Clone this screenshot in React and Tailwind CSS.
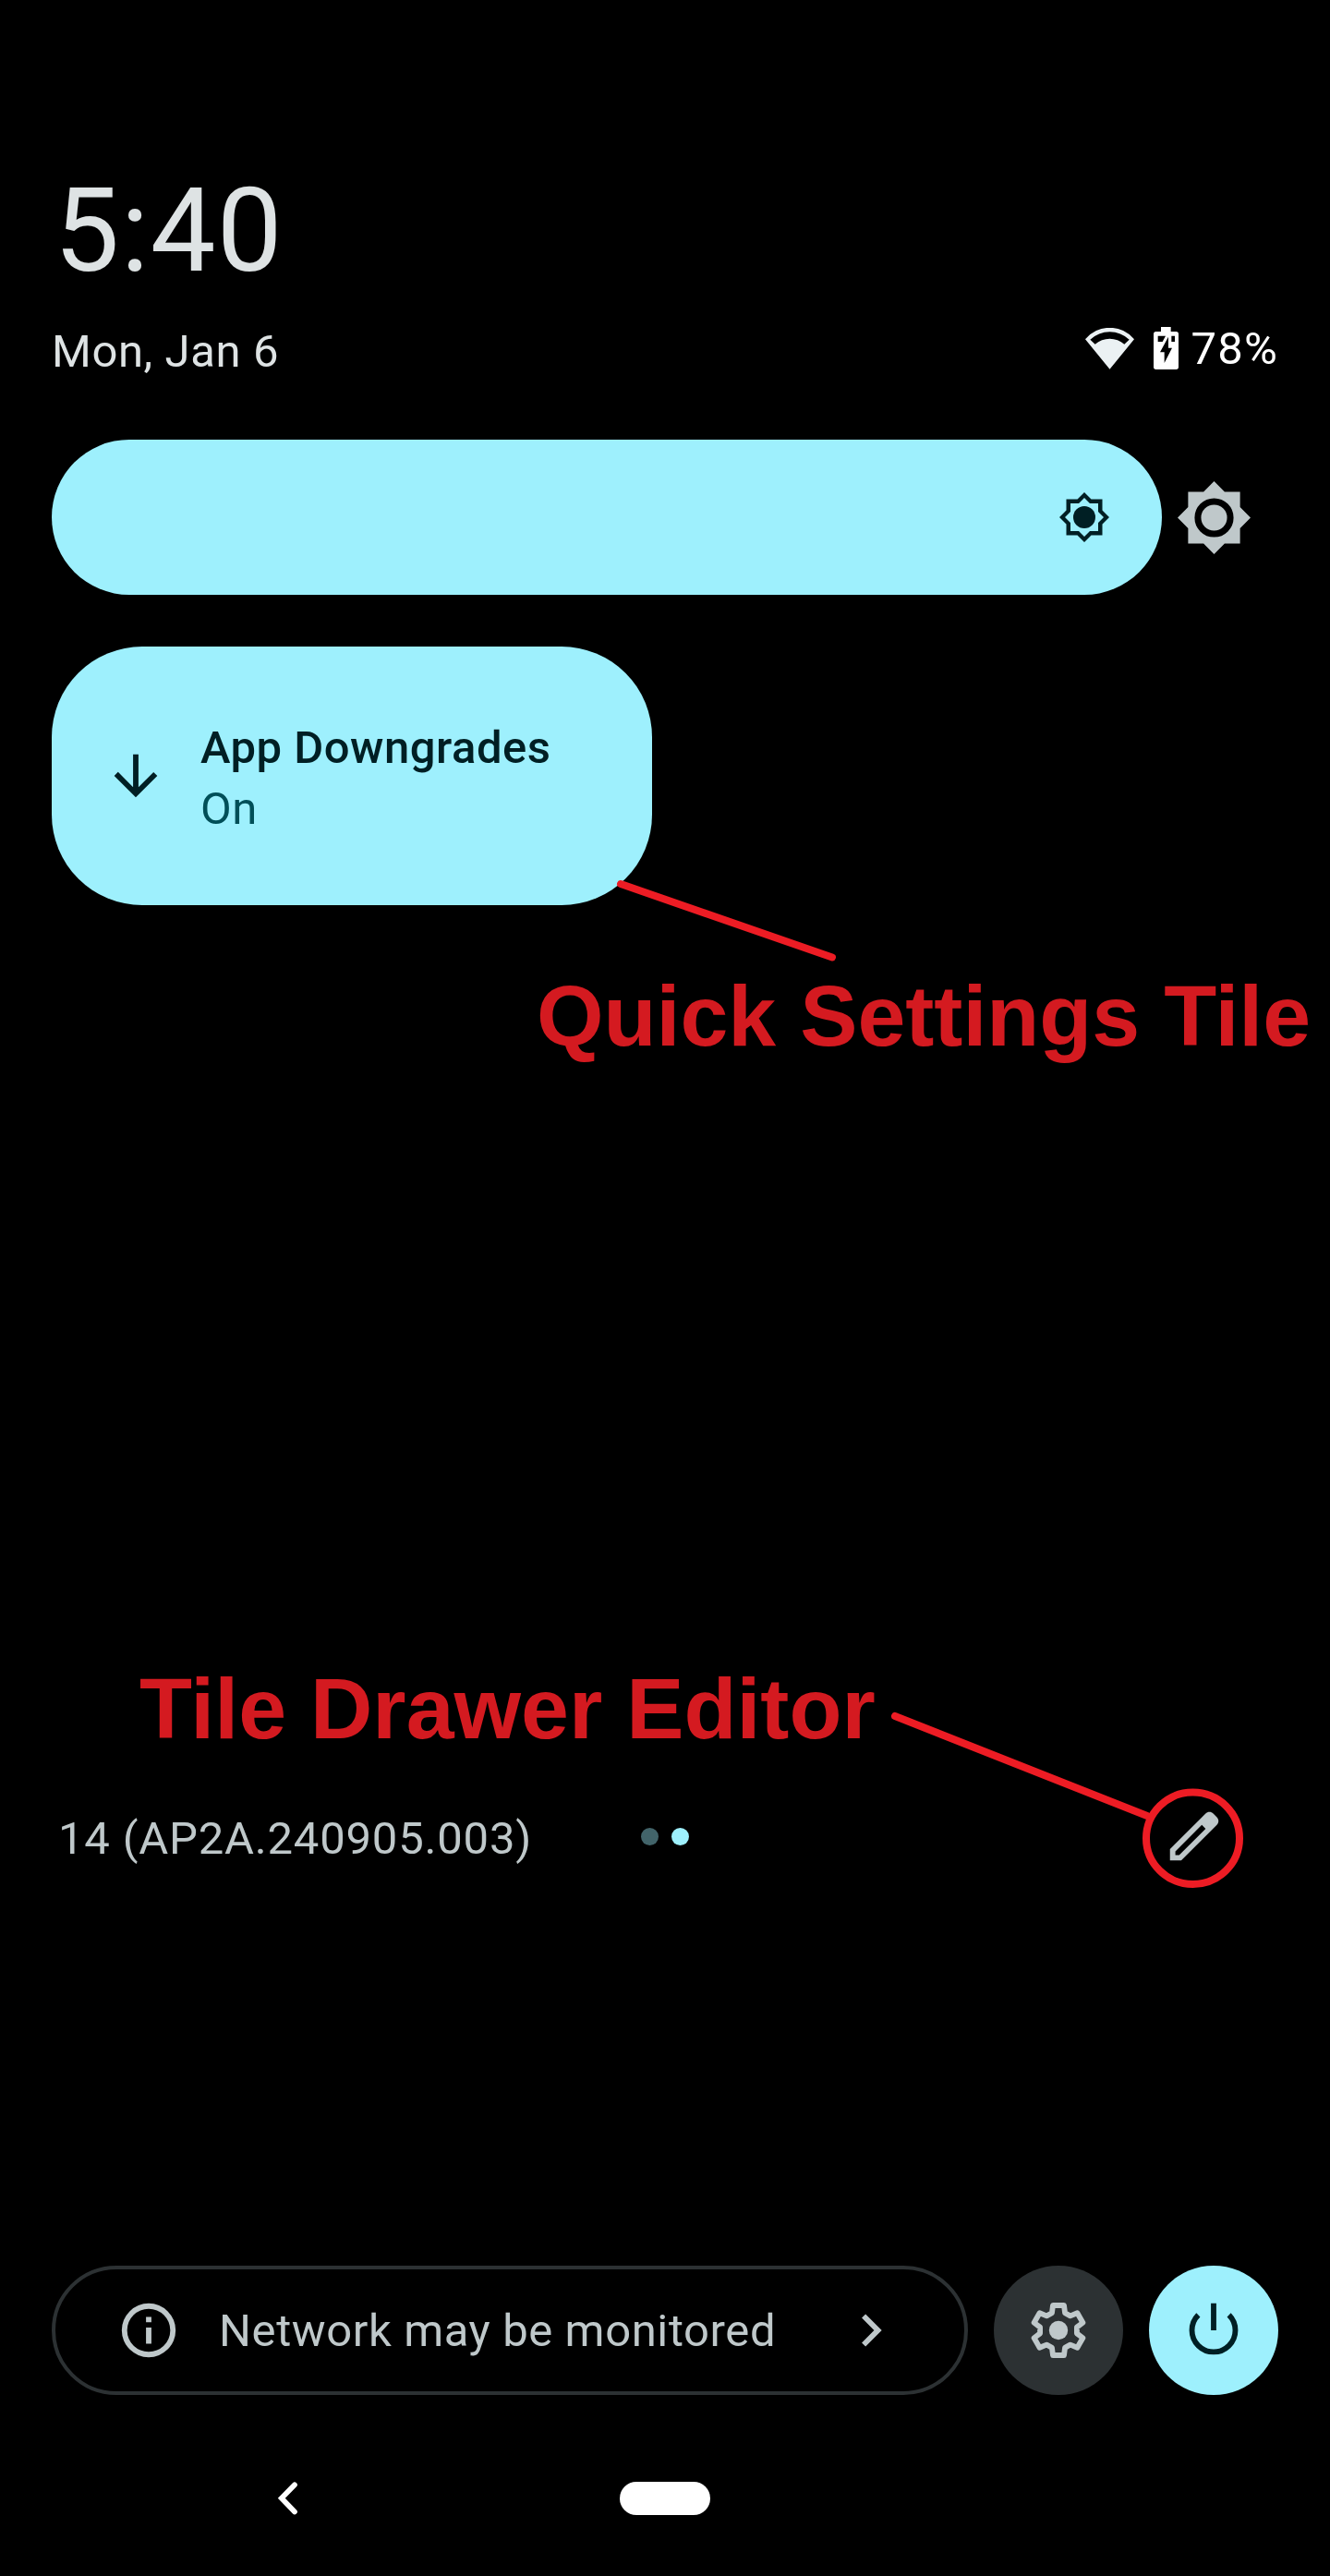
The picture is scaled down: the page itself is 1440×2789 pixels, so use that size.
const polar = (r, deg) => {
  const a = (deg * Math.PI) / 180;
  return `${(12 + r * Math.sin(a)).toFixed(2)},${(12 - r * Math.cos(a)).toFixed(2)}`;
};

const gearPoints = [0, 60, 120, 180, 240, 300]
  .flatMap((t) => [
    polar(9.49, t - 12.5),
    polar(9.49, t + 12.5),
    polar(6.92, t + 20.5),
    polar(6.92, t + 39.5),
  ])
  .join(" ");

function WifiIcon() {
  return (
    <svg className="h-[45px] w-[53px]" viewBox="105 75 159 135" fill="#ebf1f3">
      <path
        fillRule="evenodd"
        d="M184.500 209L105 112A103 103 0 0 1 264 112ZM121 113L137 128A71.700 71.700 0 0 1 232 128L248 113A93 93 0 0 0 121 113Z"
      />
    </svg>
  );
}

function BatteryIcon() {
  return (
    <svg className="h-[46px] w-[27px]" viewBox="0 0 81 138" fill="#fff">
      <path d="M24 0h32v15h17a8 8 0 0 1 8 8v107a8 8 0 0 1-8 8H8a8 8 0 0 1-8-8V23a8 8 0 0 1 8-8h16z" />
      <path fill="#000" d="M14 29h25L29 48H14zM58 29h11v19H58zM48 32v36h12L35 117V82H21z" />
    </svg>
  );
}

function SunOutline() {
  return (
    <svg className="size-[54px]" viewBox="-81 -81 162 162" fill="#001f24">
      <path
        fillRule="evenodd"
        d="M0-81L22.500-58.500H58.500V-22.500L81 0L58.500 22.500V58.500H22.500L0 81L-22.500 58.500H-58.500V22.500L-81 0L-58.500-22.500V-58.500H-22.500ZM0-63L-18-45H-45V-18L-63 0L-45 18V45H-18L0 63L18 45H45V18L63 0L45-18V-45H18Z"
      />
      <circle r="36" />
    </svg>
  );
}

function SunSolid() {
  return (
    <svg className="size-[79px]" viewBox="-118 -118 236 236" fill="#bfc8ca">
      <path d="M0-118L34-84H84V-34L118 0L84 34V84H34L0 118L-34 84H-84V34L-118 0L-84-34V-84H-34Z" />
      <circle r="52.500" fill="none" stroke="#000" strokeWidth="21" />
    </svg>
  );
}

function Icon({ children, className }) {
  return (
    <svg className={`size-[70px] shrink-0 ${className}`} viewBox="0 0 24 24" fill="currentColor">
      {children}
    </svg>
  );
}

function StatusBar() {
  return (
    <div className="mt-[39px] flex h-14 items-start justify-between">
      <span className="pt-px text-[49px] leading-[56px] tracking-[0.6px] text-[#dee3e4]">Mon, Jan 6</span>
      <div className="flex h-14 items-start">
        <div className="mt-[3px]"><WifiIcon /></div>
        <div className="mt-[2px] ml-[21px]"><BatteryIcon /></div>
        <span className="-mt-[2px] ml-[13.5px] text-[49px] leading-[56px] tracking-[1.2px] text-white">78%</span>
      </div>
    </div>
  );
}

export default function App() {
  return (
    <div className="relative flex h-[2789px] w-[1440px] flex-col overflow-hidden bg-black px-14 pt-[187px] font-['Roboto',sans-serif]">
      <div className="pl-[2.5px] text-[126px] leading-[126px] tracking-[1.4px] text-[#dee3e4]">5:40</div>
      <StatusBar />

      <div className="mt-[68px] flex items-center">
        <div className="flex h-[168px] w-[1202px] items-center justify-end rounded-full bg-[#9ef0fd] pr-[57px]">
          <SunOutline />
        </div>
        <div className="ml-[16.5px]"><SunSolid /></div>
      </div>

      <div className="mt-14 flex h-[280px] w-[650px] items-center rounded-[98px] bg-[#9ef0fd] pl-14">
        <Icon className="text-[#001f24]">
          <path d="M20 12l-1.410-1.410L13 16.170V4h-2v12.170l-5.580-5.590L4 12l8 8 8-8z" />
        </Icon>
        <div className="ml-[35px] pt-[6px] text-[49px] leading-[66px]">
          <div className="font-medium tracking-[0.5px] text-[#001f24]">App Downgrades</div>
          <div className="tracking-[0.5px] text-[#004f58]">On</div>
        </div>
      </div>

      <div className="mt-[64px] -mr-14 pl-[525px] font-['Liberation_Sans',sans-serif] text-[93.300px] leading-[112px] font-bold whitespace-nowrap text-[#d41a20]">
        Quick Settings Tile
      </div>
      <div className="mt-[638px] pl-[95px] font-['Liberation_Sans',sans-serif] text-[93.300px] leading-[112px] font-bold whitespace-nowrap text-[#d41a20]">
        Tile Drawer Editor
      </div>

      <div className="mt-[47px] flex h-[70px] items-center">
        <span className="mt-[6px] w-[638px] pl-[7px] text-[49px] leading-[56px] tracking-[0.8px] text-[#bfc8ca]">
          14 (AP2A.240905.003)
        </span>
        <div className="flex gap-[14px]">
          <span className="size-[19px] rounded-full bg-[#42646a]" />
          <span className="size-[19px] rounded-full bg-[#9ef0fd]" />
        </div>
        <Icon className="mr-14 ml-auto text-[#bfc8ca]">
          <path
            fillRule="evenodd"
            d="M20.410 4.940l-1.350-1.350c-.78-.78-2.050-.78-2.830 0L3 16.820V21h4.180L20.410 7.770c.79-.78.79-2.050 0-2.830zM6.410 19H5v-1.360l9.820-9.820 1.410 1.410z"
          />
        </Icon>
      </div>

      <div className="mt-[430px] flex gap-7">
        <div className="flex h-[140px] w-[992px] items-center rounded-full border-4 border-[#2c3133] text-[#bfc8ca]">
          <Icon className="ml-[66px]">
            <path d="M12 2a10 10 0 1 0 0 20 10 10 0 0 0 0-20zm0 18a8 8 0 1 1 0-16 8 8 0 0 1 0 16zM11 7h2v2h-2zM11 11h2v6h-2z" />
          </Icon>
          <span className="mt-[2px] ml-[41px] text-[49px] leading-[56px] tracking-[0.6px] whitespace-nowrap">Network may be monitored</span>
          <Icon className="mr-[66px] ml-auto">
            <path d="M10 6L8.590 7.410 13.170 12l-4.580 4.590L10 18l6-6z" />
          </Icon>
        </div>
        <div className="flex size-[140px] items-center justify-center rounded-full bg-[#2c3133]">
          <Icon className="text-[#bfc8ca]">
            <polygon points={gearPoints} fill="none" stroke="currentColor" strokeWidth="2" strokeLinejoin="round" />
            <circle cx="12" cy="12" r="3.500" />
          </Icon>
        </div>
        <div className="flex size-[140px] items-center justify-center rounded-full bg-[#9ef0fd]">
          <Icon className="text-[#001f24]">
            <path d="M12 2v10M6.300 6.300a8.050 8.050 0 1 0 11.400 0" fill="none" stroke="currentColor" strokeWidth="2" />
          </Icon>
        </div>
      </div>

      <div className="mt-[94px] flex h-9 items-center">
        <svg className="ml-[244px] h-9 w-6" viewBox="0 0 24 36" fill="none" stroke="#fff" strokeWidth="5.700">
          <path d="M19 3.200L4.800 17.800L19 32.400" strokeLinecap="round" />
        </svg>
        <div className="ml-[347px] h-9 w-[98px] rounded-full bg-white" />
      </div>

      <svg className="pointer-events-none absolute top-0 left-0 h-[2789px] w-[1440px]" fill="none" stroke="#ed1c24" strokeWidth="8" strokeLinecap="round">
        <path d="M672 957L901 1036.500M969 1858L1242 1966" />
        <ellipse cx="1291.500" cy="1990.300" rx="50.500" ry="49.700" />
      </svg>
    </div>
  );
}
